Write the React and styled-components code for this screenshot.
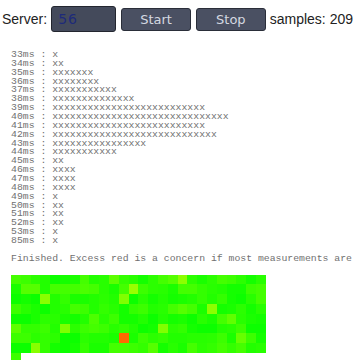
import React from 'react'
import styled, { createGlobalStyle } from 'styled-components'

const GlobalStyle = createGlobalStyle`
  html, body {
    margin: 0;
    padding: 0;
    background: #ffffff;
    overflow: hidden;
  }
`

const histogram = [
  [33, 1], [34, 2], [35, 7], [36, 8], [37, 11], [38, 14], [39, 26], [40, 30],
  [41, 26], [42, 28], [43, 16], [44, 11], [45, 2], [46, 4], [47, 4], [48, 4],
  [49, 1], [50, 2], [51, 2], [52, 2], [53, 1], [85, 1],
]

const greens = ['#22ff00', '#2bff00', '#33ff00', '#14ff00', '#3cff00', '#1aff00', '#44ff00', '#0cff00', '#28ff00']

const overrides = {
  '0-10': '#5cff00', '0-16': '#55ff00', '0-17': '#8cff00',
  '1-1': '#55ff00', '1-2': '#55ff00', '1-7': '#4cff00', '1-12': '#99ff00',
  '2-3': '#88ff00', '2-11': '#80ff00',
  '3-17': '#55ff00', '3-20': '#8cff00',
  '4-8': '#4cff00', '4-22': '#60ff00',
  '5-0': '#5cff00', '5-5': '#80ff00', '5-15': '#80ff00',
  '6-11': '#ff6a00', '6-23': '#66ff00',
  '7-2': '#88ff00', '7-14': '#55ff00',
}

let seed = 17
function rand() {
  seed = (seed * 1103515245 + 12345) % 2147483648
  return seed / 2147483648
}

const cells = Array.from({ length: 209 }, (_, i) => {
  const row = Math.floor(i / 26)
  const col = i % 26
  return overrides[`${row}-${col}`] || greens[Math.floor(rand() * greens.length)]
})

function App() {
  return (
    <>
      <GlobalStyle />
      <Page>
        <Toolbar>
          <Label>Server:</Label>
          <ServerInput defaultValue='56' />
          <Button>Start</Button>
          <Button>Stop</Button>
          <Label>samples: 209</Label>
        </Toolbar>

        <Output>
          {histogram.map(([ms, n]) => `${ms}ms : ${'x'.repeat(n)}`).join('\n')}
          {'\n\n'}
          Finished. Excess red is a concern if most measurements are
        </Output>

        <Grid>
          {cells.map((c, i) => (
            <Cell key={i} $color={c} />
          ))}
        </Grid>
      </Page>
    </>
  )
}

const Page = styled.div`
  width: 353px;
  height: 360px;
  overflow: hidden;
`

const Toolbar = styled.div`
  display: flex;
  align-items: center;
  gap: 4px;
  padding: 6px 0 0 2px;
  height: 26px;
`

const Label = styled.span`
  font-family: "Liberation Sans", Arial, sans-serif;
  font-size: 14px;
  color: #222;
  white-space: nowrap;
`

const ServerInput = styled.input`
  box-sizing: border-box;
  width: 65px;
  height: 26px;
  padding: 0 6px;
  background: #444a5b;
  border: 1px solid #23262f;
  border-radius: 3px;
  color: #1e2a7a;
  font: 14px "DejaVu Sans", Verdana, sans-serif;
  letter-spacing: 1px;
  outline: none;
`

const Button = styled.button`
  box-sizing: border-box;
  width: 70px;
  height: 23px;
  margin-left: 1px;
  background: #4a5062;
  border: 1px solid #2a2e39;
  border-radius: 3px;
  color: #d4d8e0;
  font: 13px "DejaVu Sans", Verdana, sans-serif;
  padding: 0;
`

const Output = styled.pre`
  margin: 19px 0 0 11px;
  font-family: "Liberation Mono", "Courier New", monospace;
  font-size: 9.8px;
  line-height: 8.86px;
  color: #707070;
  white-space: pre;
`

const Grid = styled.div`
  display: grid;
  grid-template-columns: repeat(26, 9.8px);
  grid-auto-rows: 9.8px;
  width: 254.8px;
  margin: 11px 0 0 11px;
`

const Cell = styled.div`
  background: ${p => p.$color};
`

export default App
